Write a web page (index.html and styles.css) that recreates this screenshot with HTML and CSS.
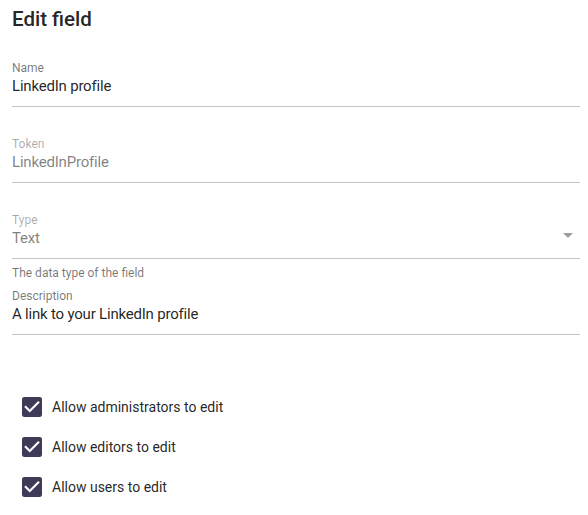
FILE: index.html
```html
<!DOCTYPE html>
<html>
<head>
<meta charset="utf-8">
<link rel="stylesheet" href="styles.css">
</head>
<body>
<div class="page">
  <h1 class="title">Edit field</h1>

  <div class="field">
    <div class="label">Name</div>
    <div class="value">LinkedIn profile</div>
  </div>

  <div class="field disabled">
    <div class="label">Token</div>
    <div class="value">LinkedInProfile</div>
  </div>

  <div class="field disabled select">
    <div class="label">Type</div>
    <div class="value-row">
      <div class="value">Text</div>
      <span class="arrow"></span>
    </div>
  </div>
  <div class="helper">The data type of the field</div>

  <div class="field desc">
    <div class="label">Description</div>
    <div class="value">A link to your LinkedIn profile</div>
  </div>

  <div class="checks">
    <label class="check">
      <svg class="box" viewBox="3 3 18 18" width="20" height="20"><path fill="#3d3b58" d="M19 3H5c-1.11 0-2 .9-2 2v14c0 1.1.89 2 2 2h14c1.11 0 2-.9 2-2V5c0-1.1-.89-2-2-2z"/><path fill="#fff" d="M10 17l-5-5 1.41-1.41L10 14.170l7.59-7.59L19 8l-9 9z"/></svg>
      <span>Allow administrators to edit</span>
    </label>
    <label class="check">
      <svg class="box" viewBox="3 3 18 18" width="20" height="20"><path fill="#3d3b58" d="M19 3H5c-1.11 0-2 .9-2 2v14c0 1.1.89 2 2 2h14c1.11 0 2-.9 2-2V5c0-1.1-.89-2-2-2z"/><path fill="#fff" d="M10 17l-5-5 1.41-1.41L10 14.17l7.59-7.59L19 8l-9 9z"/></svg>
      <span>Allow editors to edit</span>
    </label>
    <label class="check">
      <svg class="box" viewBox="3 3 18 18" width="20" height="20"><path fill="#3d3b58" d="M19 3H5c-1.11 0-2 .9-2 2v14c0 1.1.89 2 2 2h14c1.11 0 2-.9 2-2V5c0-1.1-.89-2-2-2z"/><path fill="#fff" d="M10 17l-5-5 1.41-1.41L10 14.17l7.59-7.59L19 8l-9 9z"/></svg>
      <span>Allow users to edit</span>
    </label>
  </div>
</div>
</body>
</html>
```

FILE: styles.css
```css
html, body {
  margin: 0;
  padding: 0;
  background: #fff;
}
body {
  font-family: Roboto, "Liberation Sans", Arial, sans-serif;
  color: rgba(0, 0, 0, 0.87);
}
.page {
  padding: 0 8px 0 12px;
}
.title {
  margin: 0;
  padding-top: 7px;
  font-size: 20.5px;
  line-height: 24px;
  font-weight: 500;
  color: rgba(0, 0, 0, 0.87);
}
.field {
  display: flex;
  flex-direction: column;
  border-bottom: 1px solid #c4c4c4;
  padding-bottom: 10px;
  margin-top: 30px;
}
.label {
  font-size: 12px;
  line-height: 14px;
  color: rgba(0, 0, 0, 0.54);
  margin-bottom: 2px;
}
.value {
  font-size: 15px;
  letter-spacing: -0.2px;
  line-height: 19px;
  color: rgba(0, 0, 0, 0.87);
}
.disabled .label {
  color: rgba(0, 0, 0, 0.34);
}
.disabled .value {
  color: rgba(0, 0, 0, 0.5);
}
.value-row {
  display: flex;
  justify-content: space-between;
  align-items: flex-start;
}
.arrow {
  width: 0;
  height: 0;
  margin-top: 4px;
  margin-right: 7px;
  border-left: 5px solid transparent;
  border-right: 5px solid transparent;
  border-top: 5px solid rgba(0, 0, 0, 0.38);
}
.helper {
  margin-top: 7px;
  font-size: 12px;
  line-height: 14px;
  color: rgba(0, 0, 0, 0.54);
}
.field.desc {
  margin-top: 9px;
}
.checks {
  display: flex;
  flex-direction: column;
  gap: 20px;
  padding-left: 10px;
  margin-top: 62px;
}
.check {
  display: flex;
  align-items: center;
  gap: 10px;
  font-size: 14px;
  line-height: 20px;
  color: rgba(0, 0, 0, 0.87);
}
.box {
  display: block;
  flex: none;
}
```
